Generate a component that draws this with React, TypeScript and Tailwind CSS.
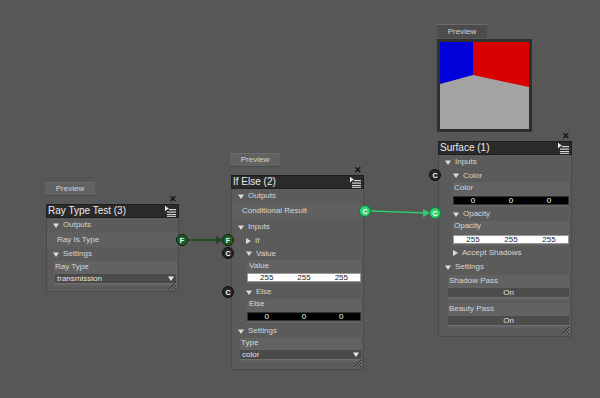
import React from "react";

const Tri = ({ open = true }: { open?: boolean }) =>
  open ? (
    <svg width="6" height="5" className="shrink-0">
      <path d="M0 0.5H6L3 5Z" fill="#dcdcdc" />
    </svg>
  ) : (
    <svg width="5" height="6" className="shrink-0">
      <path d="M0 0L5 3L0 6Z" fill="#dcdcdc" />
    </svg>
  );

const MenuIcon = () => (
  <svg width="11" height="11" viewBox="0 0 11 11">
    <path d="M0.5 0.5L4 2.5L0.5 4.5Z" fill="#f2f2f2" />
    <rect x="0" y="0" width="1" height="5" fill="#f2f2f2" />
    <rect x="4" y="3" width="7" height="1.2" fill="#d9d9d9" />
    <rect x="2" y="5.5" width="9" height="1.2" fill="#d9d9d9" />
    <rect x="2" y="8" width="9" height="1.2" fill="#d9d9d9" />
    <rect x="2" y="10" width="9" height="1" fill="#bdbdbd" />
  </svg>
);

const Grip = () => (
  <svg width="9" height="9" className="absolute right-[1px] bottom-[1px]">
    <path d="M8 1L1 8M8 4L4 8M8 7L7 8" stroke="#2e2e2e" strokeWidth="1" />
    <path d="M8.5 2L2 8.5M8.5 5L5 8.5" stroke="#8a8a8a" strokeWidth="0.7" />
  </svg>
);

const Header = ({ title }: { title: string }) => (
  <div className="relative">
    <span className="absolute right-[2px] -top-[9px] text-[9px] leading-none text-[#111] font-bold">✕</span>
    <div className="h-[14px] bg-[#2a2a2a] flex items-center justify-between pl-[1px] pr-[2px] border border-[#1f1f1f]">
      <span className="text-[10px] leading-none text-[#ececec]">{title}</span>
      <MenuIcon />
    </div>
  </div>
);

const Sec = ({ label, open = true, cls }: { label: string; open?: boolean; cls: string }) => (
  <div className={`flex items-center gap-[4px] text-[8px] leading-none text-[#d6d6d6] ${cls}`}>
    <Tri open={open} />
    <span>{label}</span>
  </div>
);

const Bar = ({ white, vals }: { white: boolean; vals: string[] }) => (
  <div
    className={`grid grid-cols-3 h-[9px] items-center text-center text-[8px] leading-none border ${
      white ? "bg-white text-[#222] border-[#999]" : "bg-black text-white border-[#333]"
    }`}
  >
    {vals.map((v, i) => (
      <span key={i}>{v}</span>
    ))}
  </div>
);

const Dropdown = ({ value }: { value: string }) => (
  <div className="h-[10px] bg-[#4a4a4a] border-b border-[#6e6e6e] flex items-center justify-between px-[2px] text-[8px] leading-none text-[#e2e2e2]">
    <span>{value}</span>
    <svg width="6" height="5">
      <path d="M0 0.5H6L3 5Z" fill="#e8e8e8" />
    </svg>
  </div>
);

const Port = ({ letter, kind, cls }: { letter: string; kind: "f" | "c" | "g"; cls: string }) => {
  const look =
    kind === "f"
      ? "bg-[#1f5e22] border-[#0d220e]"
      : kind === "g"
      ? "bg-[#30d070] border-[#147a3a]"
      : "bg-[#262626] border-[#0e0e0e]";
  return (
    <div
      className={`absolute w-[12px] h-[12px] rounded-full border flex items-center justify-center text-[7px] font-bold leading-none text-white ${look} ${cls}`}
    >
      {letter}
    </div>
  );
};

const PreviewBtn = ({ cls, dark = false }: { cls: string; dark?: boolean }) => (
  <div
    className={`absolute w-[50px] h-[14px] flex items-center justify-center text-[8px] text-[#d4d4d4] border-t border-[#6c6c6c] ${
      dark ? "bg-[#4c4c4c]" : "bg-[#626262] border-b border-b-[#4a4a4a]"
    } ${cls}`}
  >
    Preview
  </div>
);

const Body = ({ children, cls }: { children: React.ReactNode; cls: string }) => (
  <div className={`relative bg-[#5b5b5b] border-x border-b border-[#4b4b4b] ${cls}`}>
    {children}
    <Grip />
  </div>
);

export default function App() {
  return (
    <div
      className="relative w-[600px] h-[398px] overflow-hidden bg-[#575757]"
      style={{ fontFamily: '"Liberation Sans", Arial, sans-serif' }}
    >
      {/* Ray Type Test */}
      <PreviewBtn cls="left-[45px] top-[182px]" />
      <div className="absolute left-[46px] top-[204px] w-[133px]">
        <Header title="Ray Type Test (3)" />
        <Body cls="pb-[5px]">
          <Sec label="Outputs" cls="h-[14px] pl-[6px]" />
          <div className="h-[15px] bg-[#606060] flex items-center pl-[10px] text-[8px] text-[#d6d6d6] leading-none">
            Ray Is Type
          </div>
          <Sec label="Settings" cls="h-[14px] pl-[6px]" />
          <div className="ml-[7px] mr-[1px] bg-[#626262] pt-[1px] pb-[2px] px-[1px]">
            <div className="h-[10px] flex items-center text-[8px] leading-none text-[#d6d6d6]">Ray Type</div>
            <div className="mt-[2px]">
              <Dropdown value="transmission" />
            </div>
          </div>
        </Body>
        <Port letter="F" kind="f" cls="right-[-9px] top-[30px]" />
      </div>

      {/* If Else */}
      <PreviewBtn cls="left-[230px] top-[153px]" />
      <div className="absolute left-[231px] top-[175px] w-[133px]">
        <Header title="If Else (2)" />
        <Body cls="pb-[7px]">
          <Sec label="Outputs" cls="h-[14px] pl-[6px]" />
          <div className="h-[16px] bg-[#606060] flex items-center pl-[10px] text-[8px] text-[#d6d6d6] leading-none">
            Conditional Result
          </div>
          <Sec label="Inputs" cls="h-[14px] pl-[6px] mt-[1px]" />
          <Sec label="If" open={false} cls="h-[13px] pl-[14px]" />
          <Sec label="Value" cls="h-[13px] pl-[14px]" />
          <div className="ml-[15px] mr-[2px] bg-[#626262] pb-[2px]">
            <div className="h-[11px] flex items-center pl-[2px] text-[8px] leading-none text-[#d6d6d6]">Value</div>
            <div className="mt-[2px]">
              <Bar white vals={["255", "255", "255"]} />
            </div>
          </div>
          <Sec label="Else" cls="h-[14px] pl-[14px] mt-[1px]" />
          <div className="ml-[15px] mr-[2px] bg-[#626262] pb-[2px]">
            <div className="h-[10px] flex items-center pl-[2px] text-[8px] leading-none text-[#d6d6d6]">Else</div>
            <div className="mt-[3px]">
              <Bar white={false} vals={["0", "0", "0"]} />
            </div>
          </div>
          <Sec label="Settings" cls="h-[14px] pl-[6px] mt-[1px]" />
          <div className="ml-[8px] mr-[2px] bg-[#626262] pb-[2px]">
            <div className="h-[10px] flex items-center pl-[1px] text-[8px] leading-none text-[#d6d6d6]">Type</div>
            <div className="mt-[2px]">
              <Dropdown value="color" />
            </div>
          </div>
        </Body>
        <Port letter="C" kind="g" cls="right-[-7px] top-[30px]" />
        <Port letter="F" kind="f" cls="left-[-9px] top-[59px]" />
        <Port letter="C" kind="c" cls="left-[-9px] top-[72px]" />
        <Port letter="C" kind="c" cls="left-[-9px] top-[111px]" />
      </div>

      {/* Surface */}
      <PreviewBtn cls="left-[437px] top-[24px]" dark />
      <div className="absolute left-[437px] top-[39px] w-[95px] h-[93px] bg-[#2f2f2f] p-[3px]">
        <svg width="89" height="87" viewBox="0 0 89 87" className="block">
          <rect width="89" height="87" fill="#a3a3a3" />
          <path d="M0 0H33V33L0 42Z" fill="#0000d8" />
          <path d="M33 0H89V45L33 33Z" fill="#d80000" />
        </svg>
      </div>
      <div className="absolute left-[438px] top-[141px] w-[134px]">
        <Header title="Surface (1)" />
        <Body cls="pb-[8px]">
          <Sec label="Inputs" cls="h-[14px] pl-[6px]" />
          <Sec label="Color" cls="h-[13px] pl-[14px]" />
          <div className="ml-[14px] mr-[2px] bg-[#626262] pb-[2px]">
            <div className="h-[11px] flex items-center pl-[1px] text-[8px] leading-none text-[#d6d6d6]">Color</div>
            <div className="mt-[3px]">
              <Bar white={false} vals={["0", "0", "0"]} />
            </div>
          </div>
          <Sec label="Opacity" cls="h-[14px] pl-[14px]" />
          <div className="ml-[14px] mr-[2px] bg-[#626262] pb-[2px]">
            <div className="h-[10px] flex items-center pl-[1px] text-[8px] leading-none text-[#d6d6d6]">Opacity</div>
            <div className="mt-[4px]">
              <Bar white vals={["255", "255", "255"]} />
            </div>
          </div>
          <Sec label="Accept Shadows" open={false} cls="h-[14px] pl-[14px]" />
          <Sec label="Settings" cls="h-[14px] pl-[6px]" />
          <div className="ml-[9px] mr-[2px] bg-[#626262] pb-[2px] mt-[1px]">
            <div className="h-[11px] flex items-center pl-[1px] text-[8px] leading-none text-[#d6d6d6]">Shadow Pass</div>
            <div className="mt-[2px] h-[10px] bg-[#4c4c4c] border-b border-[#707070] flex items-center justify-center text-[8px] leading-none text-[#e0e0e0]">
              On
            </div>
          </div>
          <div className="ml-[9px] mr-[2px] bg-[#626262] pb-[2px] mt-[3px]">
            <div className="h-[11px] flex items-center pl-[1px] text-[8px] leading-none text-[#d6d6d6]">Beauty Pass</div>
            <div className="mt-[2px] h-[10px] bg-[#4c4c4c] border-b border-[#707070] flex items-center justify-center text-[8px] leading-none text-[#e0e0e0]">
              On
            </div>
          </div>
        </Body>
        <Port letter="C" kind="c" cls="left-[-9px] top-[28px]" />
        <Port letter="C" kind="g" cls="left-[-9px] top-[66px]" />
      </div>

      {/* connections */}
      <svg width="600" height="398" className="absolute left-0 top-0 pointer-events-none">
        <line x1="188" y1="240" x2="219" y2="240" stroke="#1d4a1f" strokeWidth="1.6" />
        <path d="M216 236L223 240L216 244Z" fill="#1d4a1f" />
        <line x1="371" y1="211" x2="426" y2="213" stroke="#2ecc6e" strokeWidth="1.6" />
        <path d="M423 209L430 213L423 217Z" fill="#2ecc6e" />
      </svg>
    </div>
  );
}
